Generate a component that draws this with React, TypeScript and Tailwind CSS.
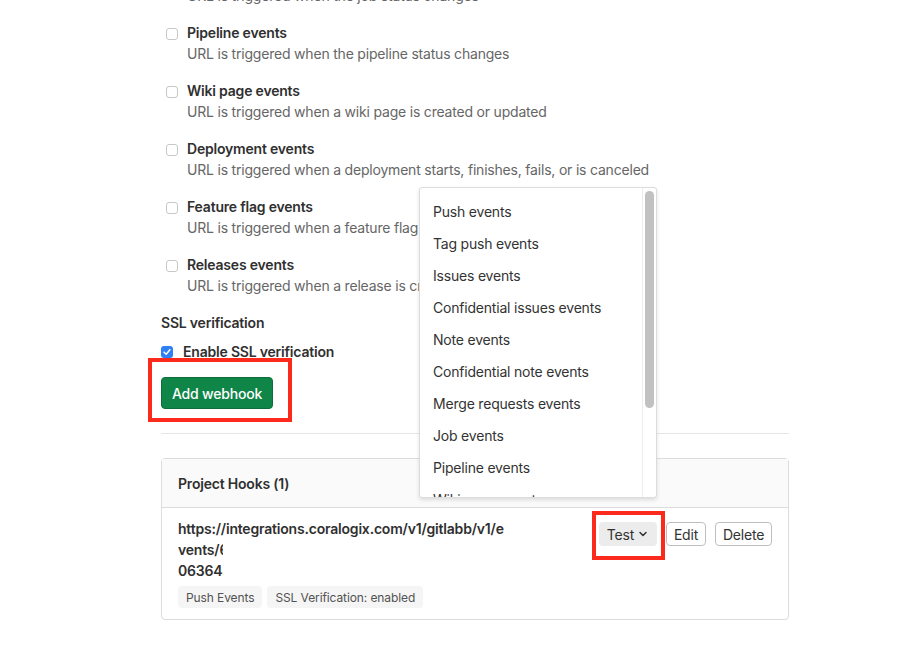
import { ChevronDown } from 'lucide-react';

const font = { fontFamily: 'Inter, "Liberation Sans", sans-serif' };

const events = [
  { title: 'Pipeline events', desc: 'URL is triggered when the pipeline status changes' },
  { title: 'Wiki page events', desc: 'URL is triggered when a wiki page is created or updated' },
  { title: 'Deployment events', desc: 'URL is triggered when a deployment starts, finishes, fails, or is canceled' },
  { title: 'Feature flag events', desc: 'URL is triggered when a feature flag is turned on or off' },
  { title: 'Releases events', desc: 'URL is triggered when a release is created or updated' },
];

const menuItems = [
  'Push events',
  'Tag push events',
  'Issues events',
  'Confidential issues events',
  'Note events',
  'Confidential note events',
  'Merge requests events',
  'Job events',
  'Pipeline events',
  'Wiki page events',
  'Tag push events',
];

function EmptyBox() {
  return <span className="mt-[6px] h-[12px] w-[12px] shrink-0 rounded-[3px] border border-[#c7c7c7] bg-white" />;
}

function EventRow({ title, desc }: { title: string; desc: string }) {
  return (
    <div className="mb-[16px] flex pl-[5px]">
      <EmptyBox />
      <div className="ml-[9px]">
        <div className="font-semibold text-[#303030]">{title}</div>
        <div className="text-[#666666]">{desc}</div>
      </div>
    </div>
  );
}

function TestMenu() {
  return (
    <div className="absolute left-[419px] top-[187px] flex h-[311px] w-[238px] rounded-[3px] border border-[#dcdcdc] bg-white shadow-[0_2px_4px_rgba(0,0,0,0.12)]">
      <div className="flex-1 overflow-hidden pt-[7px]">
        {menuItems.map((m, i) => (
          <div key={i} className="flex h-[32px] items-center px-[13px] text-[14px] text-[#333333]">
            {m}
          </div>
        ))}
      </div>
      <div className="w-[14px] border-l border-[#ececec] pl-[2px] pt-[3px]">
        <div className="h-[217px] w-[9px] rounded-full bg-[#c1c1c1]" />
      </div>
    </div>
  );
}

export default function App() {
  return (
    <div className="relative h-[671px] w-[923px] overflow-hidden bg-white text-[14px] leading-[21px] tracking-[-0.2px]" style={font}>
      <div className="ml-[161px] w-[628px]">
        <div className="-mt-[15px] mb-[16px] pl-[26px] text-[#666666]">URL is triggered when the job status changes</div>
        {events.map((e) => (
          <EventRow key={e.title} title={e.title} desc={e.desc} />
        ))}

        <div className="font-semibold text-[#303030]">SSL verification</div>
        <div className="mt-[8px] flex items-center">
          <span className="flex h-[12px] w-[12px] items-center justify-center rounded-[3px] bg-[#2f7ff5]">
            <svg viewBox="0 0 12 12" className="h-[10px] w-[10px]">
              <path d="M2.5 6.2 L5 8.6 L9.5 3.4" stroke="white" strokeWidth="1.8" fill="none" strokeLinecap="round" strokeLinejoin="round" />
            </svg>
          </span>
          <span className="ml-[10px] font-semibold text-[#303030]">Enable SSL verification</span>
        </div>

        <div className="relative mt-[15px] w-[112px]">
          <button className="h-[32px] w-[112px] rounded-[4px] border border-[#0e6e3b] bg-[#108548] text-[14px] font-medium text-white">
            Add webhook
          </button>
          <div className="absolute -left-[13px] -top-[19px] h-[64px] w-[144px] border-[4px] border-[#fb2a1c]" />
        </div>

        <div className="mt-[24px] h-px bg-[#e6e6e6]" />

        <div className="mt-[24px] rounded-[4px] border border-[#dcdcdc]">
          <div className="flex h-[49px] items-center border-b border-[#dcdcdc] bg-[#fafafa] px-[16px] font-semibold text-[#303030]">
            Project Hooks (1)
          </div>
          <div className="flex justify-between px-[16px] pb-[11px] pt-[10px]">
            <div>
              <div className="font-semibold text-[#303030]">https://integrations.coralogix.com/v1/gitlabb/v1/e</div>
              <div className="w-[45px] overflow-hidden whitespace-nowrap font-semibold text-[#303030]">vents/6a1f</div>
              <div className="w-[45px] overflow-hidden whitespace-nowrap font-semibold text-[#303030]">06364a</div>
              <div className="mt-[5px] flex gap-[5px] text-[12px] tracking-[-0.1px] text-[#525252]">
                <span className="flex h-[22px] items-center rounded-[4px] bg-[#f5f5f5] px-[8px]">Push Events</span>
                <span className="flex h-[22px] items-center rounded-[4px] bg-[#f5f5f5] px-[8px]">SSL Verification: enabled</span>
              </div>
            </div>
            <div className="mt-[4px] flex items-start gap-[9px]">
              <div className="relative">
                <button className="flex h-[24px] w-[58px] items-center justify-center gap-[3px] rounded-[4px] bg-[#ececec] text-[14px] text-[#333333]">
                  Test
                  <ChevronDown size={12} strokeWidth={3} />
                </button>
                <div className="absolute -left-[7px] -top-[11px] h-[49px] w-[73px] border-[4px] border-[#fb2a1c]" />
              </div>
              <button className="flex h-[24px] w-[40px] items-center justify-center rounded-[4px] border border-[#bfbfbf] bg-white text-[14px] text-[#333333]">
                Edit
              </button>
              <button className="flex h-[24px] w-[57px] items-center justify-center rounded-[4px] border border-[#bfbfbf] bg-white text-[14px] text-[#333333]">
                Delete
              </button>
            </div>
          </div>
        </div>
      </div>
      <TestMenu />
    </div>
  );
}
